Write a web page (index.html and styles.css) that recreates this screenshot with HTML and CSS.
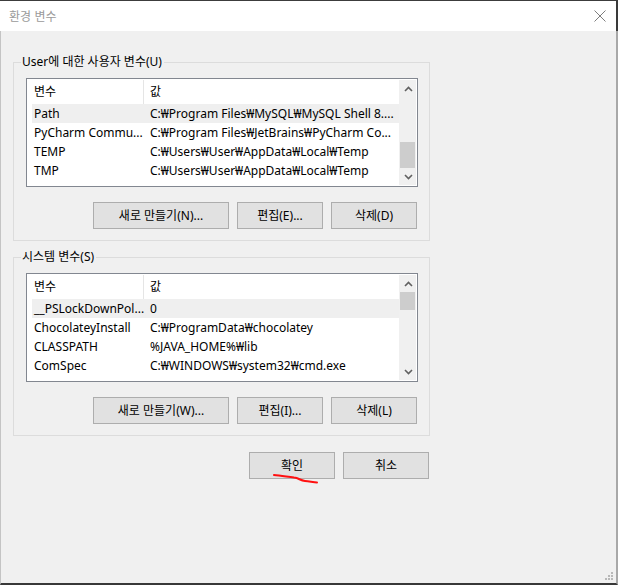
FILE: index.html
```html
<!DOCTYPE html>
<html lang="ko">
<head>
<meta charset="utf-8">
<title>환경 변수</title>
<link rel="stylesheet" href="styles.css">
</head>
<body>
<div class="window">
  <div class="titlebar">
    <span class="title">환경 변수</span>
    <svg class="close" width="12" height="12" viewBox="0 0 12 12"><path d="M0.5 0.5 L11.5 11.5 M11.5 0.5 L0.5 11.5" stroke="#7d7d7d" stroke-width="1" fill="none"/></svg>
  </div>
  <div class="content">
    <section class="group">
      <div class="legend">User에 대한 사용자 변수(U)</div>
      <div class="list">
        <div class="list-body">
          <div class="row header"><div class="c1">변수</div><div class="c2">값</div></div>
          <div class="row sel"><div class="c1">Path</div><div class="c2">C:₩Program Files₩MySQL₩MySQL Shell 8....</div></div>
          <div class="row"><div class="c1">PyCharm Commu...</div><div class="c2">C:₩Program Files₩JetBrains₩PyCharm Co...</div></div>
          <div class="row"><div class="c1">TEMP</div><div class="c2">C:₩Users₩User₩AppData₩Local₩Temp</div></div>
          <div class="row"><div class="c1">TMP</div><div class="c2">C:₩Users₩User₩AppData₩Local₩Temp</div></div>
        </div>
        <div class="scrollbar">
          <div class="arrow"><svg width="9" height="6" viewBox="0 0 9 6"><path d="M1 5 L4.5 1.5 L8 5" stroke="#606060" stroke-width="1.6" fill="none"/></svg></div>
          <div class="track"><div class="thumb thumb-user"></div></div>
          <div class="arrow"><svg width="9" height="6" viewBox="0 0 9 6"><path d="M1 1 L4.5 4.5 L8 1" stroke="#606060" stroke-width="1.6" fill="none"/></svg></div>
        </div>
      </div>
      <div class="buttons">
        <button class="btn wide">새로 만들기(N)...</button>
        <button class="btn">편집(E)...</button>
        <button class="btn">삭제(D)</button>
      </div>
    </section>

    <section class="group group2">
      <div class="legend">시스템 변수(S)</div>
      <div class="list">
        <div class="list-body">
          <div class="row header"><div class="c1">변수</div><div class="c2">값</div></div>
          <div class="row sel"><div class="c1">__PSLockDownPol...</div><div class="c2">0</div></div>
          <div class="row"><div class="c1">ChocolateyInstall</div><div class="c2">C:₩ProgramData₩chocolatey</div></div>
          <div class="row"><div class="c1">CLASSPATH</div><div class="c2">%JAVA_HOME%₩lib</div></div>
          <div class="row"><div class="c1">ComSpec</div><div class="c2">C:₩WINDOWS₩system32₩cmd.exe</div></div>
        </div>
        <div class="scrollbar">
          <div class="arrow"><svg width="9" height="6" viewBox="0 0 9 6"><path d="M1 5 L4.5 1.5 L8 5" stroke="#606060" stroke-width="1.6" fill="none"/></svg></div>
          <div class="track"><div class="thumb thumb-sys"></div></div>
          <div class="arrow"><svg width="9" height="6" viewBox="0 0 9 6"><path d="M1 1 L4.5 4.5 L8 1" stroke="#606060" stroke-width="1.6" fill="none"/></svg></div>
        </div>
      </div>
      <div class="buttons">
        <button class="btn wide">새로 만들기(W)...</button>
        <button class="btn">편집(I)...</button>
        <button class="btn">삭제(L)</button>
      </div>
    </section>

    <div class="dialog-buttons">
      <button class="btn">확인</button>
      <button class="btn">취소</button>
    </div>

    <svg class="scribble" width="50" height="12" viewBox="0 0 50 12"><path d="M2 2 C8 2.5 14 3.5 22 4.5 C27 5 28 7.5 33 8 C38 8.5 42 9.5 45 9.5" stroke="#ff1010" stroke-width="2" fill="none" stroke-linecap="round"/></svg>

    <svg class="grip" width="10" height="10" viewBox="0 0 10 10">
      <rect x="7" y="0" width="2" height="2" fill="#b8b8b8"/>
      <rect x="4" y="3" width="2" height="2" fill="#b8b8b8"/>
      <rect x="7" y="3" width="2" height="2" fill="#b8b8b8"/>
      <rect x="1" y="6" width="2" height="2" fill="#b8b8b8"/>
      <rect x="4" y="6" width="2" height="2" fill="#b8b8b8"/>
      <rect x="7" y="6" width="2" height="2" fill="#b8b8b8"/>
    </svg>
  </div>
</div>
</body>
</html>
```

FILE: styles.css
```css
* { box-sizing: border-box; }

html, body {
  margin: 0;
  padding: 0;
  background: #f0f0f0;
}

body {
  font-family: "Noto Sans", "Noto Sans CJK KR", sans-serif;
  font-size: 12px;
  color: #000;
}

.window {
  width: 618px;
  height: 585px;
  display: flex;
  flex-direction: column;
  position: relative;
}

.titlebar {
  height: 31px;
  background: #fff;
  border-top: 1px solid #3c3c3c;
  border-right: 2px solid #3a3a3a;
  display: flex;
  align-items: center;
  justify-content: space-between;
  padding: 0 10px 1px 9px;
}

.title {
  color: #9a9a9a;
  font-family: "Noto Sans CJK KR", sans-serif;
  font-size: 12px;
  line-height: 16px;
}

.close {
  display: block;
  margin-top: 0;
}

.content {
  flex: 1;
  background: #f0f0f0;
  border-left: 1px solid #c4c4c4;
  border-right: 2px solid #a8a8a8;
  border-bottom: 2px solid #383838;
  padding: 31px 0 0 12px;
  display: flex;
  flex-direction: column;
  position: relative;
}

.group {
  width: 417px;
  border: 1px solid #dcdcdc;
  padding: 0 11px 11px 12px;
  display: flex;
  flex-direction: column;
}

.group2 {
  margin-top: 16px;
}

.legend {
  align-self: flex-start;
  margin: -9px 0 0 -5px;
  padding: 0 2px 0 1px;
  line-height: 16px;
  height: 16px;
  background: #f0f0f0;
  white-space: nowrap;
}

.list {
  margin-top: 8px;
  width: 392px;
  height: 109px;
  border: 1px solid #828790;
  background: #fff;
  padding: 1px;
  display: flex;
}

.list-body {
  flex: 1;
  padding-left: 4px;
  overflow: hidden;
}

.row {
  display: flex;
  height: 19px;
  line-height: 19px;
  white-space: nowrap;
}

.row.header {
  height: 24px;
  line-height: 23px;
}

.row.sel {
  background: #efefef;
}

.c1 {
  width: 112px;
  flex: none;
  padding-left: 2px;
  overflow: hidden;
}

.header .c1 {
  border-right: 1px solid #e5e5e5;
}

.c2 {
  flex: 1;
  padding-left: 6px;
  overflow: hidden;
}

.scrollbar {
  width: 17px;
  flex: none;
  background: #f0f0f0;
  display: flex;
  flex-direction: column;
}

.arrow {
  height: 17px;
  display: flex;
  align-items: center;
  justify-content: center;
  padding-left: 1px;
}

.arrow svg { display: block; }

.track {
  flex: 1;
  padding: 0 1px;
}

.thumb {
  background: #cdcdcd;
}

.thumb-user {
  margin-top: 45px;
  height: 26px;
}

.thumb-sys {
  margin-top: 0;
  height: 18px;
}

.buttons {
  margin-top: 15px;
  margin-right: 1px;
  display: flex;
  justify-content: flex-end;
  gap: 8px;
}

.btn {
  width: 86px;
  height: 27px;
  background: #e1e1e1;
  border: 1px solid #adadad;
  border-radius: 0;
  font-family: "Noto Sans", "Noto Sans CJK KR", sans-serif;
  font-size: 12px;
  color: #000;
  padding: 0;
  line-height: 25px;
}

.btn.wide {
  width: 136px;
}

.dialog-buttons {
  margin-top: 16px;
  width: 417px;
  padding-right: 1px;
  display: flex;
  justify-content: flex-end;
  gap: 8px;
}

.scribble {
  position: absolute;
  left: 271px;
  top: 442px;
}

.grip {
  position: absolute;
  right: 2px;
  bottom: 1px;
}
```
